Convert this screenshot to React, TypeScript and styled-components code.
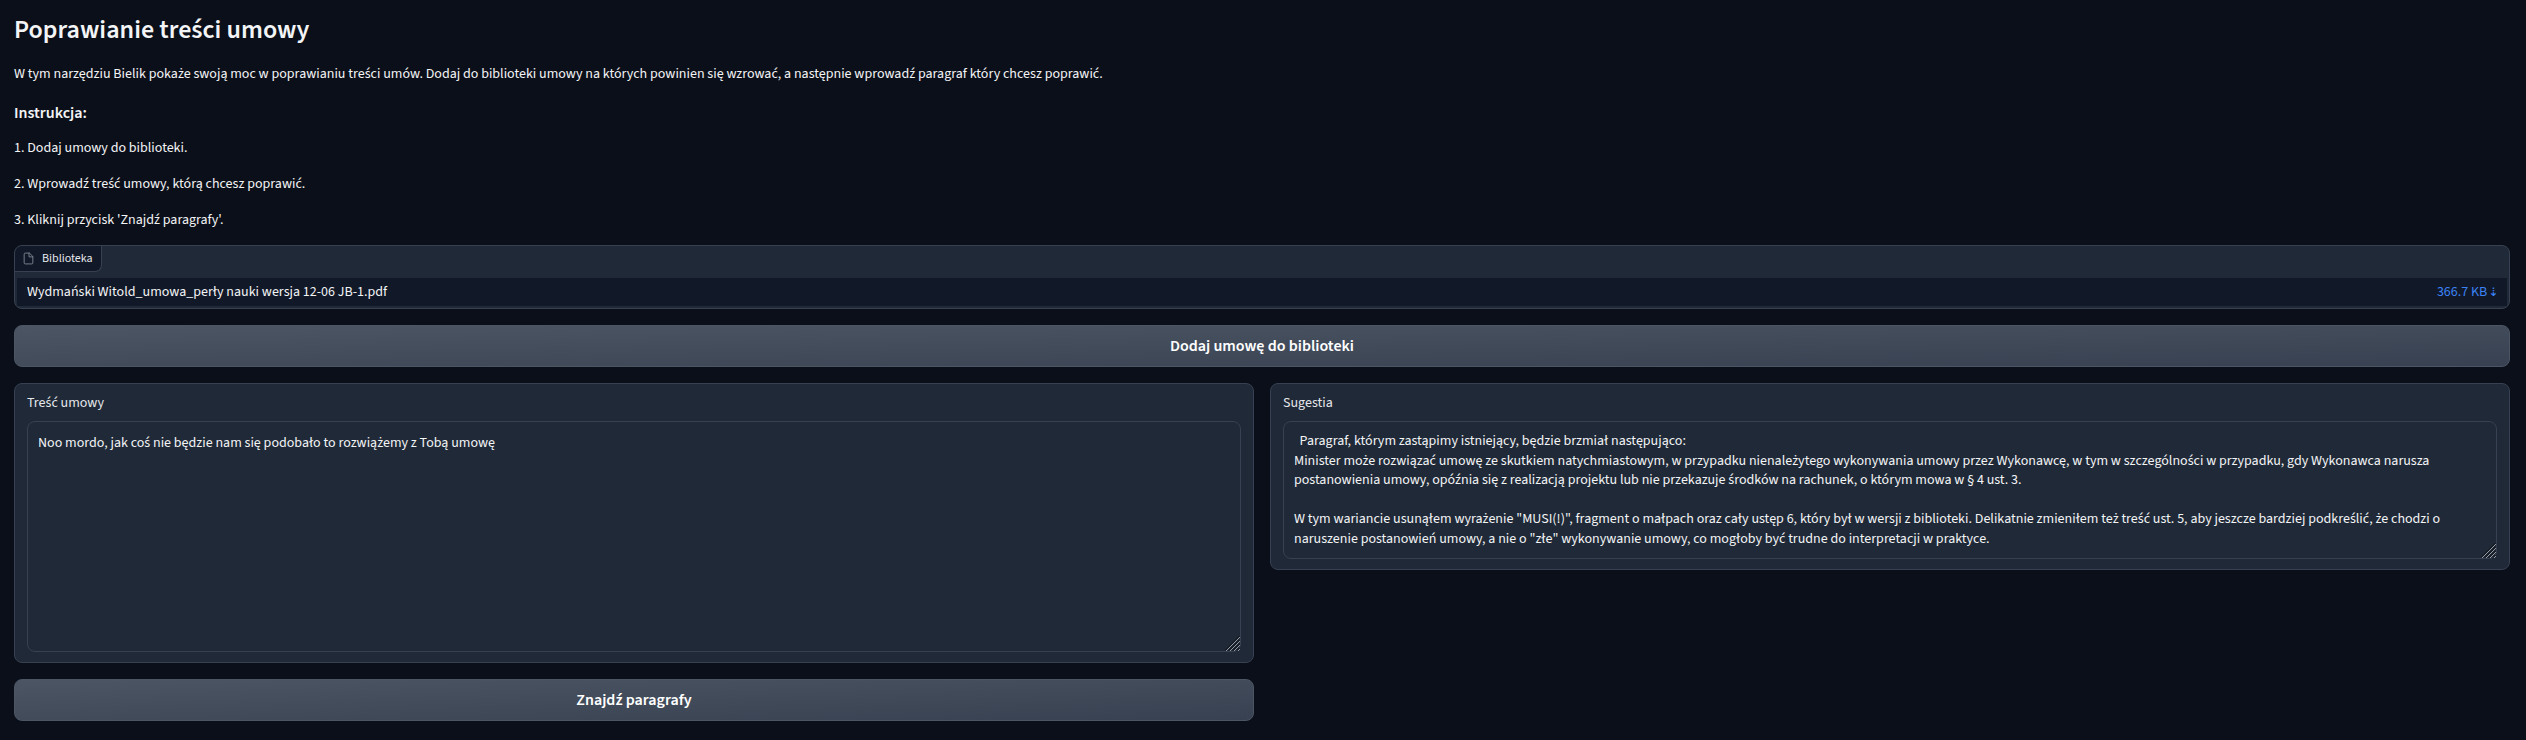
import React from "react";
import styled, { createGlobalStyle } from "styled-components";

const GlobalStyle = createGlobalStyle`
  *, *::before, *::after { box-sizing: border-box; }
  body {
    margin: 0;
    background: #0b0f19;
    color: #f3f4f6;
    font-family: "Source Sans Pro", "Source Sans 3", "Open Sans", sans-serif;
    font-size: 14px;
    line-height: 21px;
  }
`;

const Page = styled.main`
  min-height: 740px;
  padding: 13px 16px 0 14px;
  display: flex;
  flex-direction: column;
  gap: 16px;
`;

const Intro = styled.section`
  height: 216px;
`;

const Title = styled.h1`
  margin: 0 0 17px;
  font-size: 26px;
  font-weight: 600;
  line-height: 34px;
`;

const Lead = styled.p`
  margin: 0 0 16px;
`;

const Subtitle = styled.h3`
  margin: 0 0 13px;
  font-size: 16px;
  font-weight: 600;
  line-height: 24px;
`;

const Steps = styled.div`
  display: flex;
  flex-direction: column;
  gap: 14.8px;
`;

const Step = styled.p`
  margin: 0;
`;

const Block = styled.section`
  background: #1f2937;
  border: 1px solid #374151;
  border-radius: 8px;
`;

const Library = styled(Block)`
  height: 64px;
  padding: 0 2px 2px;
  overflow: hidden;
`;

const LibraryLabel = styled.div`
  width: 87px;
  height: 26px;
  margin-left: -2px;
  padding-left: 7px;
  display: flex;
  align-items: center;
  gap: 7px;
  background: #111827;
  border: solid #374151;
  border-width: 0 1px 1px 0;
  border-radius: 7px 0 7px 0;
  color: #e5e7eb;
  font-size: 12px;
  line-height: 18px;
`;

const FileIcon = styled.svg`
  width: 13px;
  height: 13px;
  flex: none;
  opacity: 0.8;
  color: #9ca3af;
`;

const FileRow = styled.div`
  height: 28px;
  margin-top: 6px;
  padding: 0 10px;
  display: flex;
  align-items: center;
  justify-content: space-between;
  background: #111827;
`;

const Download = styled.a`
  color: #3b82f6;
  text-decoration: none;
  white-space: nowrap;
`;

const Arrow = styled.span`
  margin: 0 -1.4px;
  font-family: "DejaVu Sans Mono", monospace;
  font-size: 16px;
  line-height: 1;
`;

const Button = styled.button`
  display: block;
  width: 100%;
  height: 42px;
  padding: 0;
  border: 1px solid #4b5563;
  border-radius: 8px;
  background: linear-gradient(to bottom right, #4b5563, #374151);
  color: #fff;
  font: inherit;
  font-size: 16px;
  font-weight: 600;
  line-height: 24px;
`;

const Columns = styled.div`
  display: grid;
  grid-template-columns: 1fr 1fr;
  gap: 16px;
  align-items: start;
`;

const Column = styled.div`
  display: flex;
  flex-direction: column;
  gap: 16px;
`;

const Field = styled(Block)`
  padding: 9px 12px 10px;
`;

const FieldLabel = styled.label`
  display: block;
  margin-bottom: 7px;
  color: #e5e7eb;
`;

const InputWrap = styled.div`
  position: relative;
`;

const TextArea = styled.textarea<{ $height: number; $top: number }>`
  display: block;
  width: 100%;
  height: ${(p) => p.$height}px;
  padding: ${(p) => p.$top}px 10px 0;
  border: 1px solid #374151;
  border-radius: 8px;
  outline: none;
  overflow: hidden;
  resize: none;
  background: #1f2937;
  color: #f3f4f6;
  font: inherit;
  line-height: 19.6px;
`;

const Grip = styled.svg`
  position: absolute;
  right: 1px;
  bottom: 1px;
  width: 15px;
  height: 15px;
  pointer-events: none;
`;

const ResizeGrip = () => (
  <Grip viewBox="0 0 15 15" fill="none">
    <path d="M0 14.5L14.5 0M4 14.5L14.5 4M8 14.5L14.5 8M12 14.5L14.5 12" stroke="#111318" />
    <path d="M1 15L15 1M5 15L15 5M9 15L15 9M13 15L15 13" stroke="#a3a7ad" strokeWidth="0.9" />
  </Grip>
);

interface TextFieldProps {
  label: string;
  value: string;
  height: number;
  top: number;
}

const TextField = ({ label, value, height, top }: TextFieldProps) => (
  <Field>
    <FieldLabel>{label}</FieldLabel>
    <InputWrap>
      <TextArea $height={height} $top={top} spellCheck={false} defaultValue={value} />
      <ResizeGrip />
    </InputWrap>
  </Field>
);

const clause = "Noo mordo, jak coś nie będzie nam się podobało to rozwiążemy z Tobą umowę";

const suggestion = `  Paragraf, którym zastąpimy istniejący, będzie brzmiał następująco:
Minister może rozwiązać umowę ze skutkiem natychmiastowym, w przypadku nienależytego wykonywania umowy przez Wykonawcę, w tym w szczególności w przypadku, gdy Wykonawca narusza postanowienia umowy, opóźnia się z realizacją projektu lub nie przekazuje środków na rachunek, o którym mowa w § 4 ust. 3.

W tym wariancie usunąłem wyrażenie "MUSI(!)", fragment o małpach oraz cały ustęp 6, który był w wersji z biblioteki. Delikatnie zmieniłem też treść ust. 5, aby jeszcze bardziej podkreślić, że chodzi o naruszenie postanowień umowy, a nie o "złe" wykonywanie umowy, co mogłoby być trudne do interpretacji w praktyce.`;

export default function App() {
  return (
    <>
      <GlobalStyle />
      <Page>
        <Intro>
          <Title>Poprawianie treści umowy</Title>
          <Lead>
            W tym narzędziu Bielik pokaże swoją moc w poprawianiu treści umów. Dodaj do biblioteki umowy na
            których powinien się wzrować, a następnie wprowadź paragraf który chcesz poprawić.
          </Lead>
          <Subtitle>Instrukcja:</Subtitle>
          <Steps>
            <Step>1. Dodaj umowy do biblioteki.</Step>
            <Step>2. Wprowadź treść umowy, którą chcesz poprawić.</Step>
            <Step>3. Kliknij przycisk 'Znajdź paragrafy'.</Step>
          </Steps>
        </Intro>
        <Library>
          <LibraryLabel>
            <FileIcon
              viewBox="0 0 24 24"
              fill="none"
              stroke="currentColor"
              strokeWidth="1.7"
              strokeLinecap="round"
              strokeLinejoin="round"
            >
              <path d="M13 2H6a2 2 0 0 0-2 2v16a2 2 0 0 0 2 2h12a2 2 0 0 0 2-2V9z" />
              <polyline points="13 2 13 9 20 9" />
            </FileIcon>
            Biblioteka
          </LibraryLabel>
          <FileRow>
            <span>Wydmański Witold_umowa_perły nauki wersja 12-06 JB-1.pdf</span>
            <Download>
              366.7 KB <Arrow>⇣</Arrow>
            </Download>
          </FileRow>
        </Library>
        <Button>Dodaj umowę do biblioteki</Button>
        <Columns>
          <Column>
            <TextField label="Treść umowy" value={clause} height={231} top={12} />
            <Button>Znajdź paragrafy</Button>
          </Column>
          <TextField label="Sugestia" value={suggestion} height={138} top={10} />
        </Columns>
      </Page>
    </>
  );
}
